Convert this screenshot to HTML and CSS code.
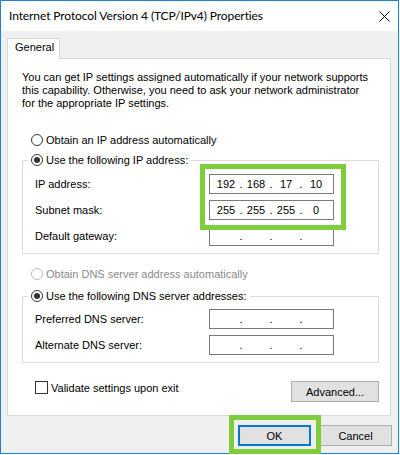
FILE: index.html
```html
<!DOCTYPE html>
<html lang="en">
<head>
    <meta charset="UTF-8">
    <meta name="viewport" content="width=device-width, initial-scale=1.0">
    <title>Internet Protocol Version 4 (TCP/IPv4) Properties</title>
    <link rel="stylesheet" href="styles.css">
</head>
<body>
<div class="window">
    <div class="titlebar">
        <span class="title">Internet Protocol Version 4 (TCP/IPv4) Properties</span>
        <svg class="close" width="11" height="11" viewBox="0 0 11 11">
            <path d="M0.5 0.5 L10.5 10.5 M10.5 0.5 L0.5 10.5" stroke="#000" stroke-width="1" fill="none"/>
        </svg>
    </div>

    <div class="content">
        <div class="tabs">
            <div class="tab">General</div>
        </div>

        <div class="panel">
            <p class="intro">You can get IP settings assigned automatically if your network supports<br>this capability. Otherwise, you need to ask your network administrator<br>for the appropriate IP settings.</p>

            <!-- IP address -->
            <div class="option first"><span class="radio"></span>Obtain an IP address automatically</div>
            <fieldset class="group ip-group">
                <legend><span class="option"><span class="radio checked"></span>Use the following IP address:</span></legend>
                <div class="rows">
                    <div class="row">
                        <span class="label">IP address:</span>
                        <div class="ip">
                            <span class="seg">192</span><span class="dot">.</span><span class="seg">168</span><span class="dot">.</span><span class="seg">17</span><span class="dot">.</span><span class="seg">10</span>
                        </div>
                    </div>
                    <div class="row">
                        <span class="label">Subnet mask:</span>
                        <div class="ip">
                            <span class="seg">255</span><span class="dot">.</span><span class="seg">255</span><span class="dot">.</span><span class="seg">255</span><span class="dot">.</span><span class="seg">0</span>
                        </div>
                    </div>
                    <div class="row">
                        <span class="label">Default gateway:</span>
                        <div class="ip">
                            <span class="seg"></span><span class="dot">.</span><span class="seg"></span><span class="dot">.</span><span class="seg"></span><span class="dot">.</span><span class="seg"></span>
                        </div>
                    </div>
                    <div class="highlight ip-highlight"></div>
                </div>
            </fieldset>

            <!-- DNS -->
            <div class="option dns-auto disabled"><span class="radio"></span>Obtain DNS server address automatically</div>
            <fieldset class="group dns-group">
                <legend><span class="option"><span class="radio checked"></span>Use the following DNS server addresses:</span></legend>
                <div class="rows">
                    <div class="row">
                        <span class="label">Preferred DNS server:</span>
                        <div class="ip">
                            <span class="seg"></span><span class="dot">.</span><span class="seg"></span><span class="dot">.</span><span class="seg"></span><span class="dot">.</span><span class="seg"></span>
                        </div>
                    </div>
                    <div class="row">
                        <span class="label">Alternate DNS server:</span>
                        <div class="ip">
                            <span class="seg"></span><span class="dot">.</span><span class="seg"></span><span class="dot">.</span><span class="seg"></span><span class="dot">.</span><span class="seg"></span>
                        </div>
                    </div>
                </div>
            </fieldset>

            <div class="bottom-row">
                <div class="check-row"><span class="checkbox"></span>Validate settings upon exit</div>
                <button class="btn advanced">Advanced...</button>
            </div>
        </div>

        <div class="actions">
            <button class="btn ok">OK</button>
            <button class="btn">Cancel</button>
            <div class="highlight ok-highlight"></div>
        </div>
    </div>
</div>
</body>
</html>
```

FILE: styles.css
```css
body {
    margin: 0;
    background-color: #fff;
    font-family: 'Liberation Sans', Arial, sans-serif;
    font-size: 11px;
    color: #000;
}
.window {
    width: 399px;
    height: 454px;
    box-sizing: border-box;
    border: 1px solid #1a84d8;
    background-color: #f0f0f0;
}
.titlebar {
    height: 30px;
    background-color: #fff;
    display: flex;
    align-items: center;
    justify-content: space-between;
    padding: 0 8px;
}
.title {
    font-family: 'Lato', 'Liberation Sans', sans-serif;
    font-size: 12px;
    letter-spacing: -0.1px;
    line-height: 30px;
}
.content {
    padding: 7px 6px 0 6px;
}
.tabs {
    display: flex;
}
.tab {
    position: relative;
    z-index: 1;
    width: 53px;
    height: 21px;
    box-sizing: border-box;
    margin-bottom: -1px;
    padding: 0 0 0 7px;
    line-height: 17px;
    background-color: #fff;
    border: 1px solid #d9d9d9;
    border-bottom: none;
}
.panel {
    width: 384px;
    height: 358px;
    box-sizing: border-box;
    padding: 12px 11px 0 14px;
    background-color: #fff;
    border: 1px solid #d9d9d9;
}
.intro {
    margin: 0;
    line-height: 13px;
    white-space: nowrap;
}
.option {
    display: flex;
    align-items: center;
    height: 16px;
    white-space: nowrap;
}
.option.first {
    margin-top: 22px;
}
.option.dns-auto {
    margin-top: 12px;
}
.option > .radio {
    margin-left: 9px;
}
legend .option > .radio {
    margin-left: 0;
}
.radio {
    width: 12px;
    height: 12px;
    box-sizing: border-box;
    border: 1px solid #333;
    border-radius: 50%;
    margin-right: 3px;
    display: flex;
    align-items: center;
    justify-content: center;
    flex: none;
}
.radio.checked::after {
    content: "";
    width: 6px;
    height: 6px;
    border-radius: 50%;
    background-color: #333;
}
.disabled {
    color: #8a8a8a;
}
.disabled .radio {
    border-color: #bcbcbc;
}
.group {
    margin: 0;
    border: 1px solid #dcdcdc;
    padding: 6px 0 7px 0;
}
.ip-group {
    margin-top: 4px;
}
.dns-group {
    margin-top: 6px;
    padding-top: 5px;
}
legend {
    margin-left: 5px;
    padding: 0 3px;
    line-height: 16px;
}
.rows {
    position: relative;
    display: flex;
    flex-direction: column;
    gap: 6px;
    padding-left: 12px;
}
.row {
    display: flex;
    align-items: center;
    height: 20px;
}
.label {
    width: 174px;
}
.ip {
    width: 125px;
    height: 20px;
    box-sizing: border-box;
    border: 1px solid #7a7a7a;
    background-color: #fff;
    display: flex;
    align-items: center;
    padding-left: 2px;
}
.seg {
    width: 28px;
    text-align: center;
}
.dot {
    width: 2px;
    display: flex;
    justify-content: center;
}
.highlight {
    position: absolute;
    box-sizing: border-box;
    border: 5px solid #7ecd3c;
    z-index: 2;
}
.ip-highlight {
    left: 177px;
    top: -10px;
    width: 146px;
    height: 66px;
}
.bottom-row {
    margin-top: 18px;
    display: flex;
    justify-content: space-between;
    align-items: flex-start;
}
.check-row {
    display: flex;
    align-items: center;
    height: 13px;
    margin-left: 13px;
}
.checkbox {
    width: 13px;
    height: 13px;
    box-sizing: border-box;
    border: 1px solid #333;
    margin-right: 3px;
}
.btn {
    font-family: inherit;
    font-size: 11px;
    color: #000;
    height: 21px;
    box-sizing: border-box;
    background-color: #e1e1e1;
    border: 1px solid #adadad;
    padding: 0;
}
.advanced {
    width: 88px;
}
.actions {
    position: relative;
    display: flex;
    justify-content: flex-end;
    gap: 8px;
    padding-top: 9px;
}
.actions .btn {
    width: 73px;
}
.btn.ok {
    border: 2px solid #0078d7;
}
.ok-highlight {
    left: 222px;
    top: -1px;
    width: 92px;
    height: 39px;
}
```
